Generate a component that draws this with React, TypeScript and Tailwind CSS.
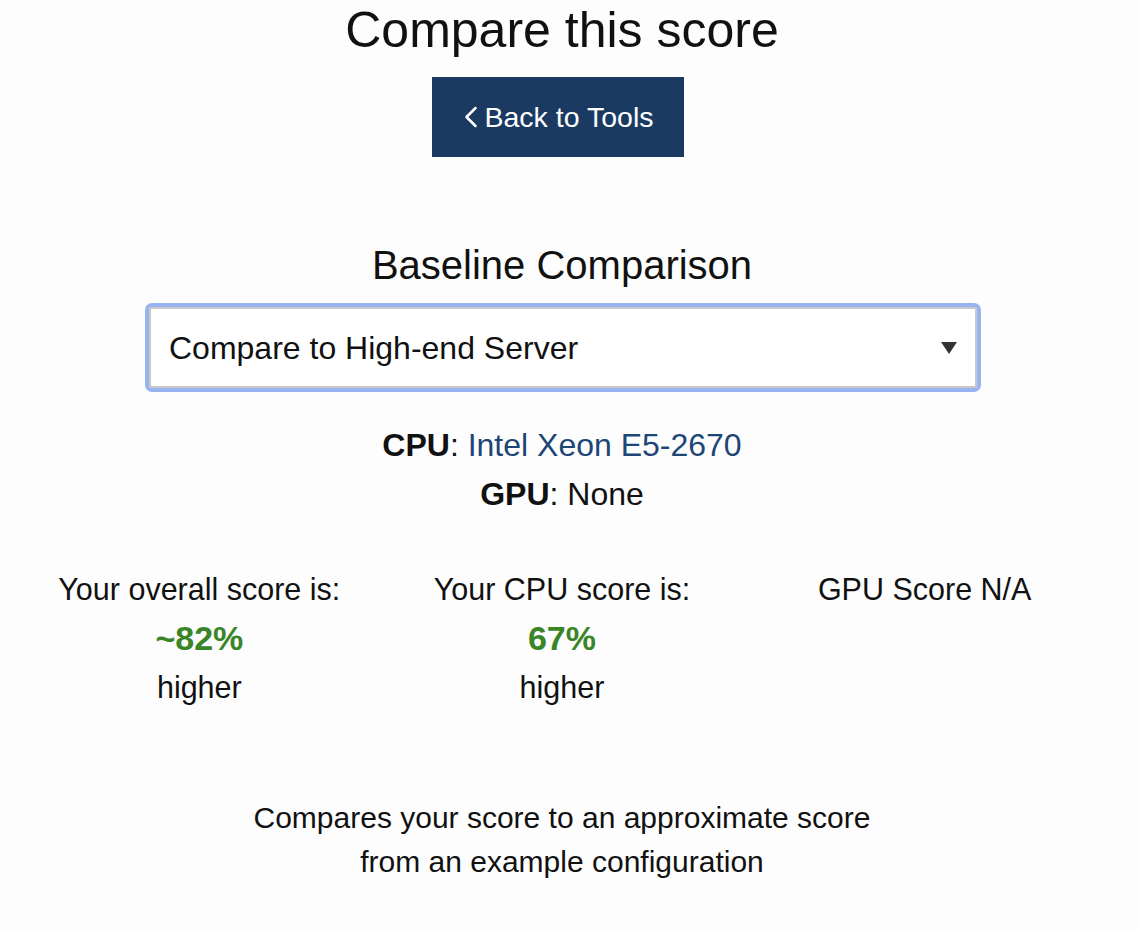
import { ChevronLeft } from "lucide-react";

const font = { fontFamily: '"Liberation Sans", Arial, sans-serif' };

const ScoreColumn = ({ label, value, note }: { label: string; value?: string; note?: string }) => (
  <div className="flex flex-col items-center text-[30.5px] leading-[49px] text-[#111]">
    <div>{label}</div>
    {value && <div className="font-bold text-[34px] text-[#3a8527]">{value}</div>}
    {note && <div>{note}</div>}
  </div>
);

export default function App() {
  return (
    <div className="min-h-[930px] bg-[#fdfdfd] text-[#111]" style={font}>
      <div className="w-[1124px] flex flex-col items-center">
        <h1 className="text-[50px] leading-[60px] font-normal">Compare this score</h1>

        <button className="mt-[17px] mr-[8px] w-[252px] h-[80px] bg-[#1a3a62] text-white text-[28.5px] flex items-center justify-center pr-[2px]">
          <ChevronLeft size={36} strokeWidth={1.7} className="-ml-[8px] -mr-[4px]" />
          Back to Tools
        </button>

        <h2 className="mt-[84px] text-[40px] leading-[48px] font-normal">Baseline Comparison</h2>

        <div className="mt-[14px] ml-[2px] w-[836px] h-[89px] rounded-[7px] bg-[#98b3f1] p-[4px]">
          <div className="h-full border-2 border-[#c9c9c9] bg-white flex items-center justify-between pl-[18px] pr-[18px]">
            <span className="text-[32px]">Compare to High-end Server</span>
            <svg width="16" height="14" viewBox="0 0 16 14">
              <polygon points="0,1 16,1 8,13" fill="#333" />
            </svg>
          </div>
        </div>

        <div className="mt-[29px] flex flex-col items-center text-[32px] leading-[49px]">
          <div>
            <span className="font-bold">CPU</span>: <span className="text-[#1d4677]">Intel Xeon E5-2670</span>
          </div>
          <div>
            <span className="font-bold">GPU</span>: None
          </div>
        </div>

        <div className="mt-[46px] w-full px-[18px] grid grid-cols-3">
          <ScoreColumn label="Your overall score is:" value="~82%" note="higher" />
          <ScoreColumn label="Your CPU score is:" value="67%" note="higher" />
          <ScoreColumn label="GPU Score N/A" />
        </div>

        <div className="mt-[84px] text-center text-[30px] leading-[44px]">
          <div>Compares your score to an approximate score</div>
          <div>from an example configuration</div>
        </div>
      </div>
    </div>
  );
}
